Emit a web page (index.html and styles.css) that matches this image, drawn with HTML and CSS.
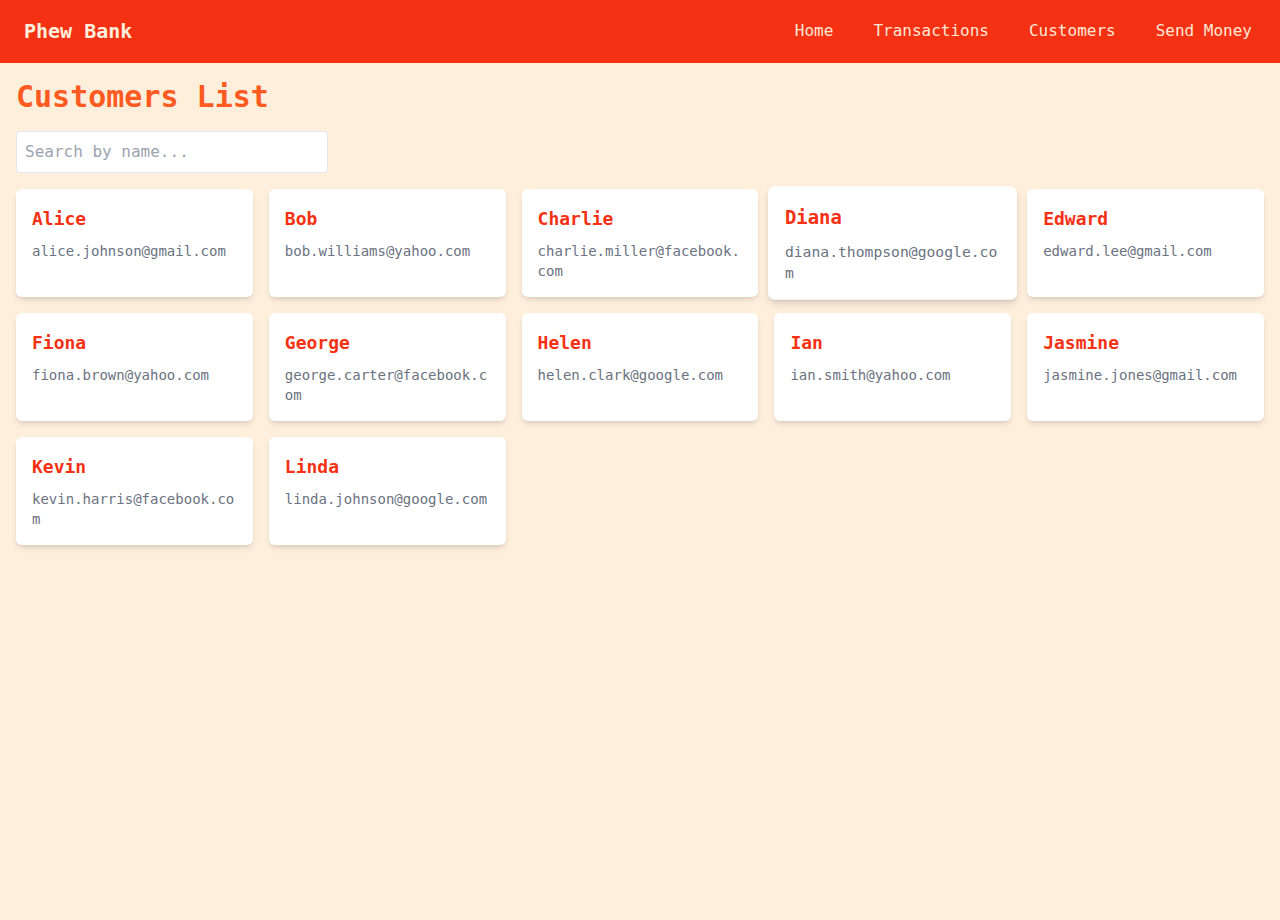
FILE: index.html
```html
<!DOCTYPE html>
<html lang="en">
<head>
<meta charset="utf-8">
<title>Phew Bank - Customers</title>
<link rel="stylesheet" href="styles.css">
</head>
<body>
<nav class="navbar">
  <div class="brand">Phew Bank</div>
  <div class="nav-links">
    <a href="#" class="nav-link">Home</a>
    <a href="#" class="nav-link">Transactions</a>
    <a href="#" class="nav-link">Customers</a>
    <a href="#" class="nav-link">Send Money</a>
  </div>
</nav>
<main class="main">
  <h1 class="title">Customers List</h1>
  <input class="search" type="text" placeholder="Search by name...">
  <div class="grid">
    <div class="card"><h2 class="name">Alice</h2><p class="email">alice.johnson@gmail.com</p></div>
    <div class="card"><h2 class="name">Bob</h2><p class="email">bob.williams@yahoo.com</p></div>
    <div class="card"><h2 class="name">Charlie</h2><p class="email">charlie.miller@facebook.com</p></div>
    <div class="card card-hover"><h2 class="name">Diana</h2><p class="email">diana.thompson@google.com</p></div>
    <div class="card"><h2 class="name">Edward</h2><p class="email">edward.lee@gmail.com</p></div>
    <div class="card"><h2 class="name">Fiona</h2><p class="email">fiona.brown@yahoo.com</p></div>
    <div class="card"><h2 class="name">George</h2><p class="email">george.carter@facebook.com</p></div>
    <div class="card"><h2 class="name">Helen</h2><p class="email">helen.clark@google.com</p></div>
    <div class="card"><h2 class="name">Ian</h2><p class="email">ian.smith@yahoo.com</p></div>
    <div class="card"><h2 class="name">Jasmine</h2><p class="email">jasmine.jones@gmail.com</p></div>
    <div class="card"><h2 class="name">Kevin</h2><p class="email">kevin.harris@facebook.com</p></div>
    <div class="card"><h2 class="name">Linda</h2><p class="email">linda.johnson@google.com</p></div>
  </div>
</main>
</body>
</html>
```
FILE: styles.css
```css
* { box-sizing: border-box; }
html, body {
  margin: 0;
  padding: 0;
}
body {
  background: #feeedc;
  font-family: "DejaVu Sans Mono", monospace;
  min-height: 920px;
}
.navbar {
  height: 63px;
  background: #f53114;
  display: flex;
  align-items: center;
  justify-content: space-between;
  padding: 0 12px 0 24px;
}
.brand {
  font-size: 20px;
  line-height: 28px;
  font-weight: bold;
  color: #feeedc;
  margin-top: -2px;
}
.nav-links {
  display: flex;
  gap: 8px;
}
.nav-link {
  color: #fde7d5;
  text-decoration: none;
  font-size: 16px;
  line-height: 24px;
  padding: 0 16px;
  margin-top: -2px;
}
.main {
  padding: 16px;
}
.title {
  margin: 0 0 16px 0;
  font-size: 30px;
  line-height: 36px;
  font-weight: bold;
  color: #ff5a1f;
}
.search {
  display: block;
  width: 312px;
  height: 42px;
  padding: 7px 8px 9px 8px;
  font-family: "DejaVu Sans Mono", monospace;
  font-size: 16px;
  line-height: 24px;
  border: 1px solid #e2e6ee;
  border-radius: 4px;
  background: #fff;
  color: #333;
  margin-bottom: 16px;
  outline: none;
}
.search::placeholder { color: #9ca3af; }
.grid {
  display: grid;
  grid-template-columns: repeat(5, 1fr);
  gap: 16px;
}
.card {
  background: #fff;
  border-radius: 6px;
  padding: 16px;
  box-shadow: 0 4px 6px -1px rgba(0,0,0,0.1), 0 2px 4px -2px rgba(0,0,0,0.1);
}
.card-hover {
  transform: scale(1.05);
  box-shadow: 0 4px 8px -1px rgba(0,0,0,0.14), 0 2px 4px -2px rgba(0,0,0,0.12);
}
.name {
  margin: 0 0 8px 0;
  font-size: 18px;
  line-height: 28px;
  font-weight: bold;
  color: #f53114;
}
.email {
  margin: 0;
  font-size: 14px;
  line-height: 20px;
  color: #6b7280;
  overflow-wrap: anywhere;
}
```
